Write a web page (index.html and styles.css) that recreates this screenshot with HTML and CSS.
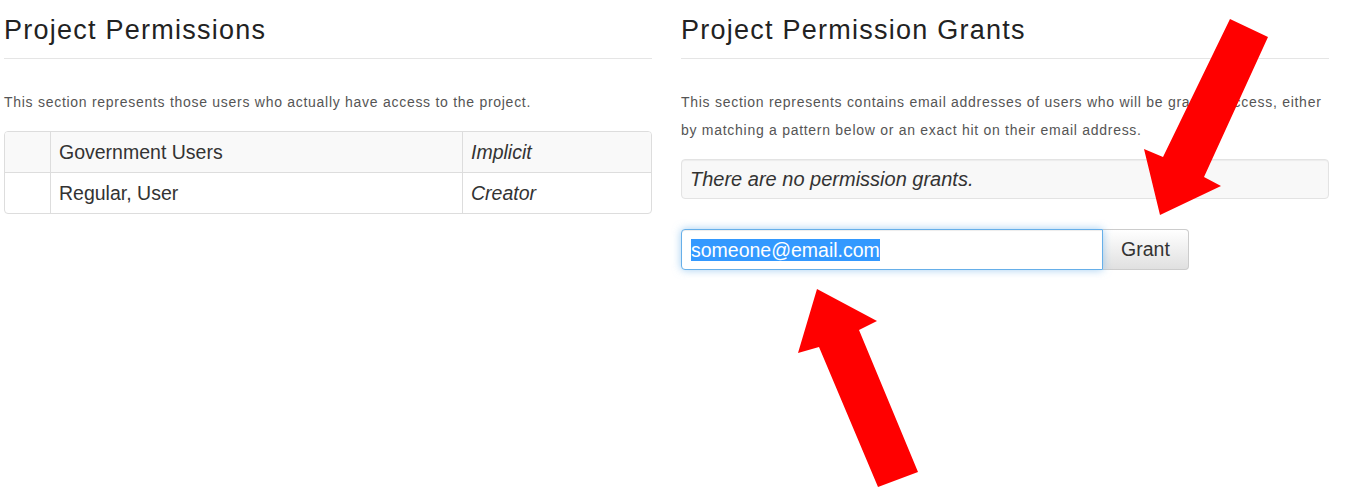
FILE: index.html
```html
<!DOCTYPE html>
<html lang="en">
<head>
<meta charset="utf-8">
<title>Project Permissions</title>
<link rel="stylesheet" href="styles.css">
</head>
<body>
<div class="page">
  <section class="col">
    <div class="page-header"><h2>Project Permissions</h2></div>
    <p class="lead-text">This section represents those users who actually have access to the project.</p>
    <div class="perm-table">
      <div class="row striped">
        <div class="cell c-icon"></div>
        <div class="cell c-name">Government Users</div>
        <div class="cell c-type">Implicit</div>
      </div>
      <div class="row">
        <div class="cell c-icon"></div>
        <div class="cell c-name">Regular, User</div>
        <div class="cell c-type">Creator</div>
      </div>
    </div>
  </section>
  <section class="col">
    <div class="page-header"><h2>Project Permission Grants</h2></div>
    <p class="lead-text">This section represents contains email addresses of users who will be granted access, either by matching a pattern below or an exact hit on their email address.</p>
    <div class="well">There are no permission grants.</div>
    <div class="input-group">
      <div class="fake-input"><span class="sel">someone@email.com</span></div>
      <button class="btn" type="button">Grant</button>
    </div>
  </section>
</div>
<svg class="arrows" width="1350" height="489" viewBox="0 0 1350 489" aria-hidden="true">
  <polygon fill="#ff0000" points="1230,19 1268,37 1204,177 1221,186 1160,215 1144,149 1163,157"/>
  <polygon fill="#ff0000" points="817,289 877,321 859,330 918,472 878,487 819,347 798,353"/>
</svg>
</body>
</html>
```

FILE: styles.css
```css
html, body {
  margin: 0;
  padding: 0;
  background: #ffffff;
}
body {
  font-family: "Liberation Sans", Arial, sans-serif;
  color: #333333;
  position: relative;
  width: 1350px;
  height: 489px;
  overflow: hidden;
}
.page {
  display: grid;
  grid-template-columns: 648px 648px;
  column-gap: 29px;
  padding-left: 4px;
}
.page-header {
  margin-top: 10px;
  padding-bottom: 8px;
  border-bottom: 1px solid #e5e5e5;
}
.page-header h2 {
  margin: 0;
  font-size: 27px;
  line-height: 40px;
  font-weight: normal;
  color: #222222;
  letter-spacing: 1.25px;
}
.lead-text {
  margin: 29px 0 15px;
  font-size: 14px;
  line-height: 28px;
  letter-spacing: 0.72px;
  color: #555555;
}
.perm-table {
  border: 1px solid #dddddd;
  border-radius: 4px;
  overflow: hidden;
}
.row {
  display: grid;
  grid-template-columns: 45px 412px 1fr;
  height: 40px;
}
.row + .row {
  border-top: 1px solid #dddddd;
}
.row.striped {
  background: #f9f9f9;
}
.cell {
  font-size: 19.5px;
  line-height: 40px;
  padding-left: 8px;
  white-space: nowrap;
}
.cell + .cell {
  border-left: 1px solid #dddddd;
}
.c-type {
  font-style: italic;
}
.well {
  height: 38px;
  border: 1px solid #e3e3e3;
  border-radius: 4px;
  background: #f8f8f8;
  box-shadow: inset 0 1px 1px rgba(0,0,0,0.05);
  font-size: 20px;
  font-style: italic;
  line-height: 38px;
  padding-left: 8px;
}
.input-group {
  display: flex;
  margin-top: 30px;
  height: 41px;
}
.fake-input {
  box-sizing: border-box;
  width: 422px;
  height: 41px;
  border: 1px solid #66afe9;
  border-radius: 4px 0 0 4px;
  box-shadow: inset 0 1px 1px rgba(0,0,0,0.075), 0 0 8px rgba(102,175,233,0.6);
  background: #ffffff;
  padding-left: 9px;
  display: flex;
  align-items: center;
  position: relative;
  z-index: 1;
}
.sel {
  background: #3399ff;
  color: #ffffff;
  font-size: 19.5px;
  line-height: 22px;
}
.btn {
  box-sizing: border-box;
  width: 86px;
  height: 41px;
  margin: 0;
  border: 1px solid #cccccc;
  border-left: none;
  border-radius: 0 4px 4px 0;
  background: linear-gradient(#ffffff, #e0e0e0);
  font-family: "Liberation Sans", Arial, sans-serif;
  font-size: 19.5px;
  color: #333333;
  padding: 0;
}
.arrows {
  position: absolute;
  left: 0;
  top: 0;
  z-index: 5;
}
```
